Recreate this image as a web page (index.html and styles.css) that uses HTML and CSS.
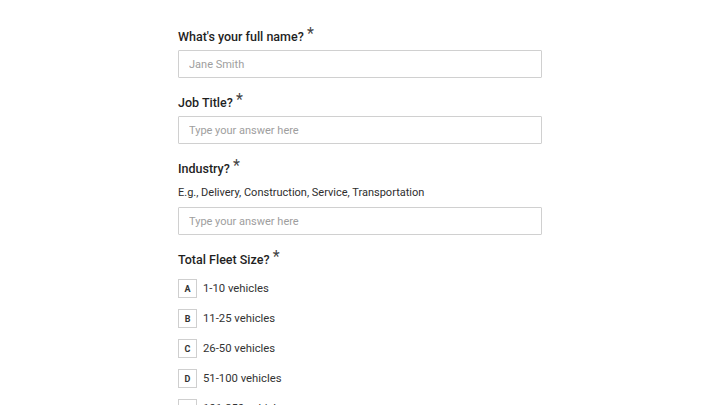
FILE: index.html
```html
<!DOCTYPE html>
<html>
<head>
  <title>Fleet Survey</title>
  <link rel="stylesheet" href="styles.css">
</head>
<body>
    <form class="survey" action="#" method="post">
        <div class="field">
            <label class="question" for="fullname">What's your full name? <span class="req">*</span></label>
            <input class="answer" type="text" id="fullname" placeholder="Jane Smith">
        </div>

        <div class="field">
            <label class="question" for="jobtitle">Job Title? <span class="req">*</span></label>
            <input class="answer" type="text" id="jobtitle" placeholder="Type your answer here">
        </div>

        <div class="field">
            <label class="question" for="industry">Industry? <span class="req">*</span></label>
            <p class="hint">E.g., Delivery, Construction, Service, Transportation</p>
            <input class="answer" type="text" id="industry" placeholder="Type your answer here">
        </div>

        <div class="field">
            <div class="question">Total Fleet Size? <span class="req">*</span></div>
            <div class="choices">
                <div class="choice"><span class="key">A</span>1-10 vehicles</div>
                <div class="choice"><span class="key">B</span>11-25 vehicles</div>
                <div class="choice"><span class="key">C</span>26-50 vehicles</div>
                <div class="choice"><span class="key">D</span>51-100 vehicles</div>
                <div class="choice"><span class="key">E</span>101-250 vehicles</div>
            </div>
        </div>
    </form>
</body>
</html>
```

FILE: styles.css
```css
body {
    margin: 0;
    padding: 0;
    background-color: #fff;
    color: #262626;
    font-family: Roboto, 'Liberation Sans', sans-serif;
}

.survey {
    width: 364px;
    margin: 0 auto;
    padding-top: 28px;
    display: flex;
    flex-direction: column;
    gap: 16px;
}

.field {
    display: flex;
    flex-direction: column;
}

.question {
    font-size: 12.5px;
    font-weight: 500;
    line-height: 18px;
    color: #1f1f1f;
    margin-bottom: 4px;
}

.req {
    font-size: 16px;
    font-weight: 400;
    line-height: 0;
    color: #444;
    position: relative;
    top: -2px;
}

.hint {
    margin: 2px 0 5px;
    font-size: 11px;
    line-height: 18px;
    color: #2e2e2e;
}

.answer {
    box-sizing: border-box;
    width: 100%;
    height: 28px;
    margin: 0;
    padding: 0 10px;
    border: 1px solid #d0d0d0;
    border-radius: 1px;
    font-family: inherit;
    font-size: 11px;
    color: #262626;
    outline: none;
}

.answer::placeholder {
    color: #9e9e9e;
}

.choices {
    display: flex;
    flex-direction: column;
    gap: 11px;
    margin-top: 6px;
}

.choice {
    display: flex;
    align-items: center;
    gap: 6px;
    font-size: 11.3px;
    color: #333;
    height: 19px;
}

.key {
    box-sizing: border-box;
    width: 19px;
    height: 19px;
    border: 1px solid #cfcfcf;
    display: flex;
    align-items: center;
    justify-content: center;
    font-size: 9px;
    font-weight: 700;
    color: #333;
}
```
